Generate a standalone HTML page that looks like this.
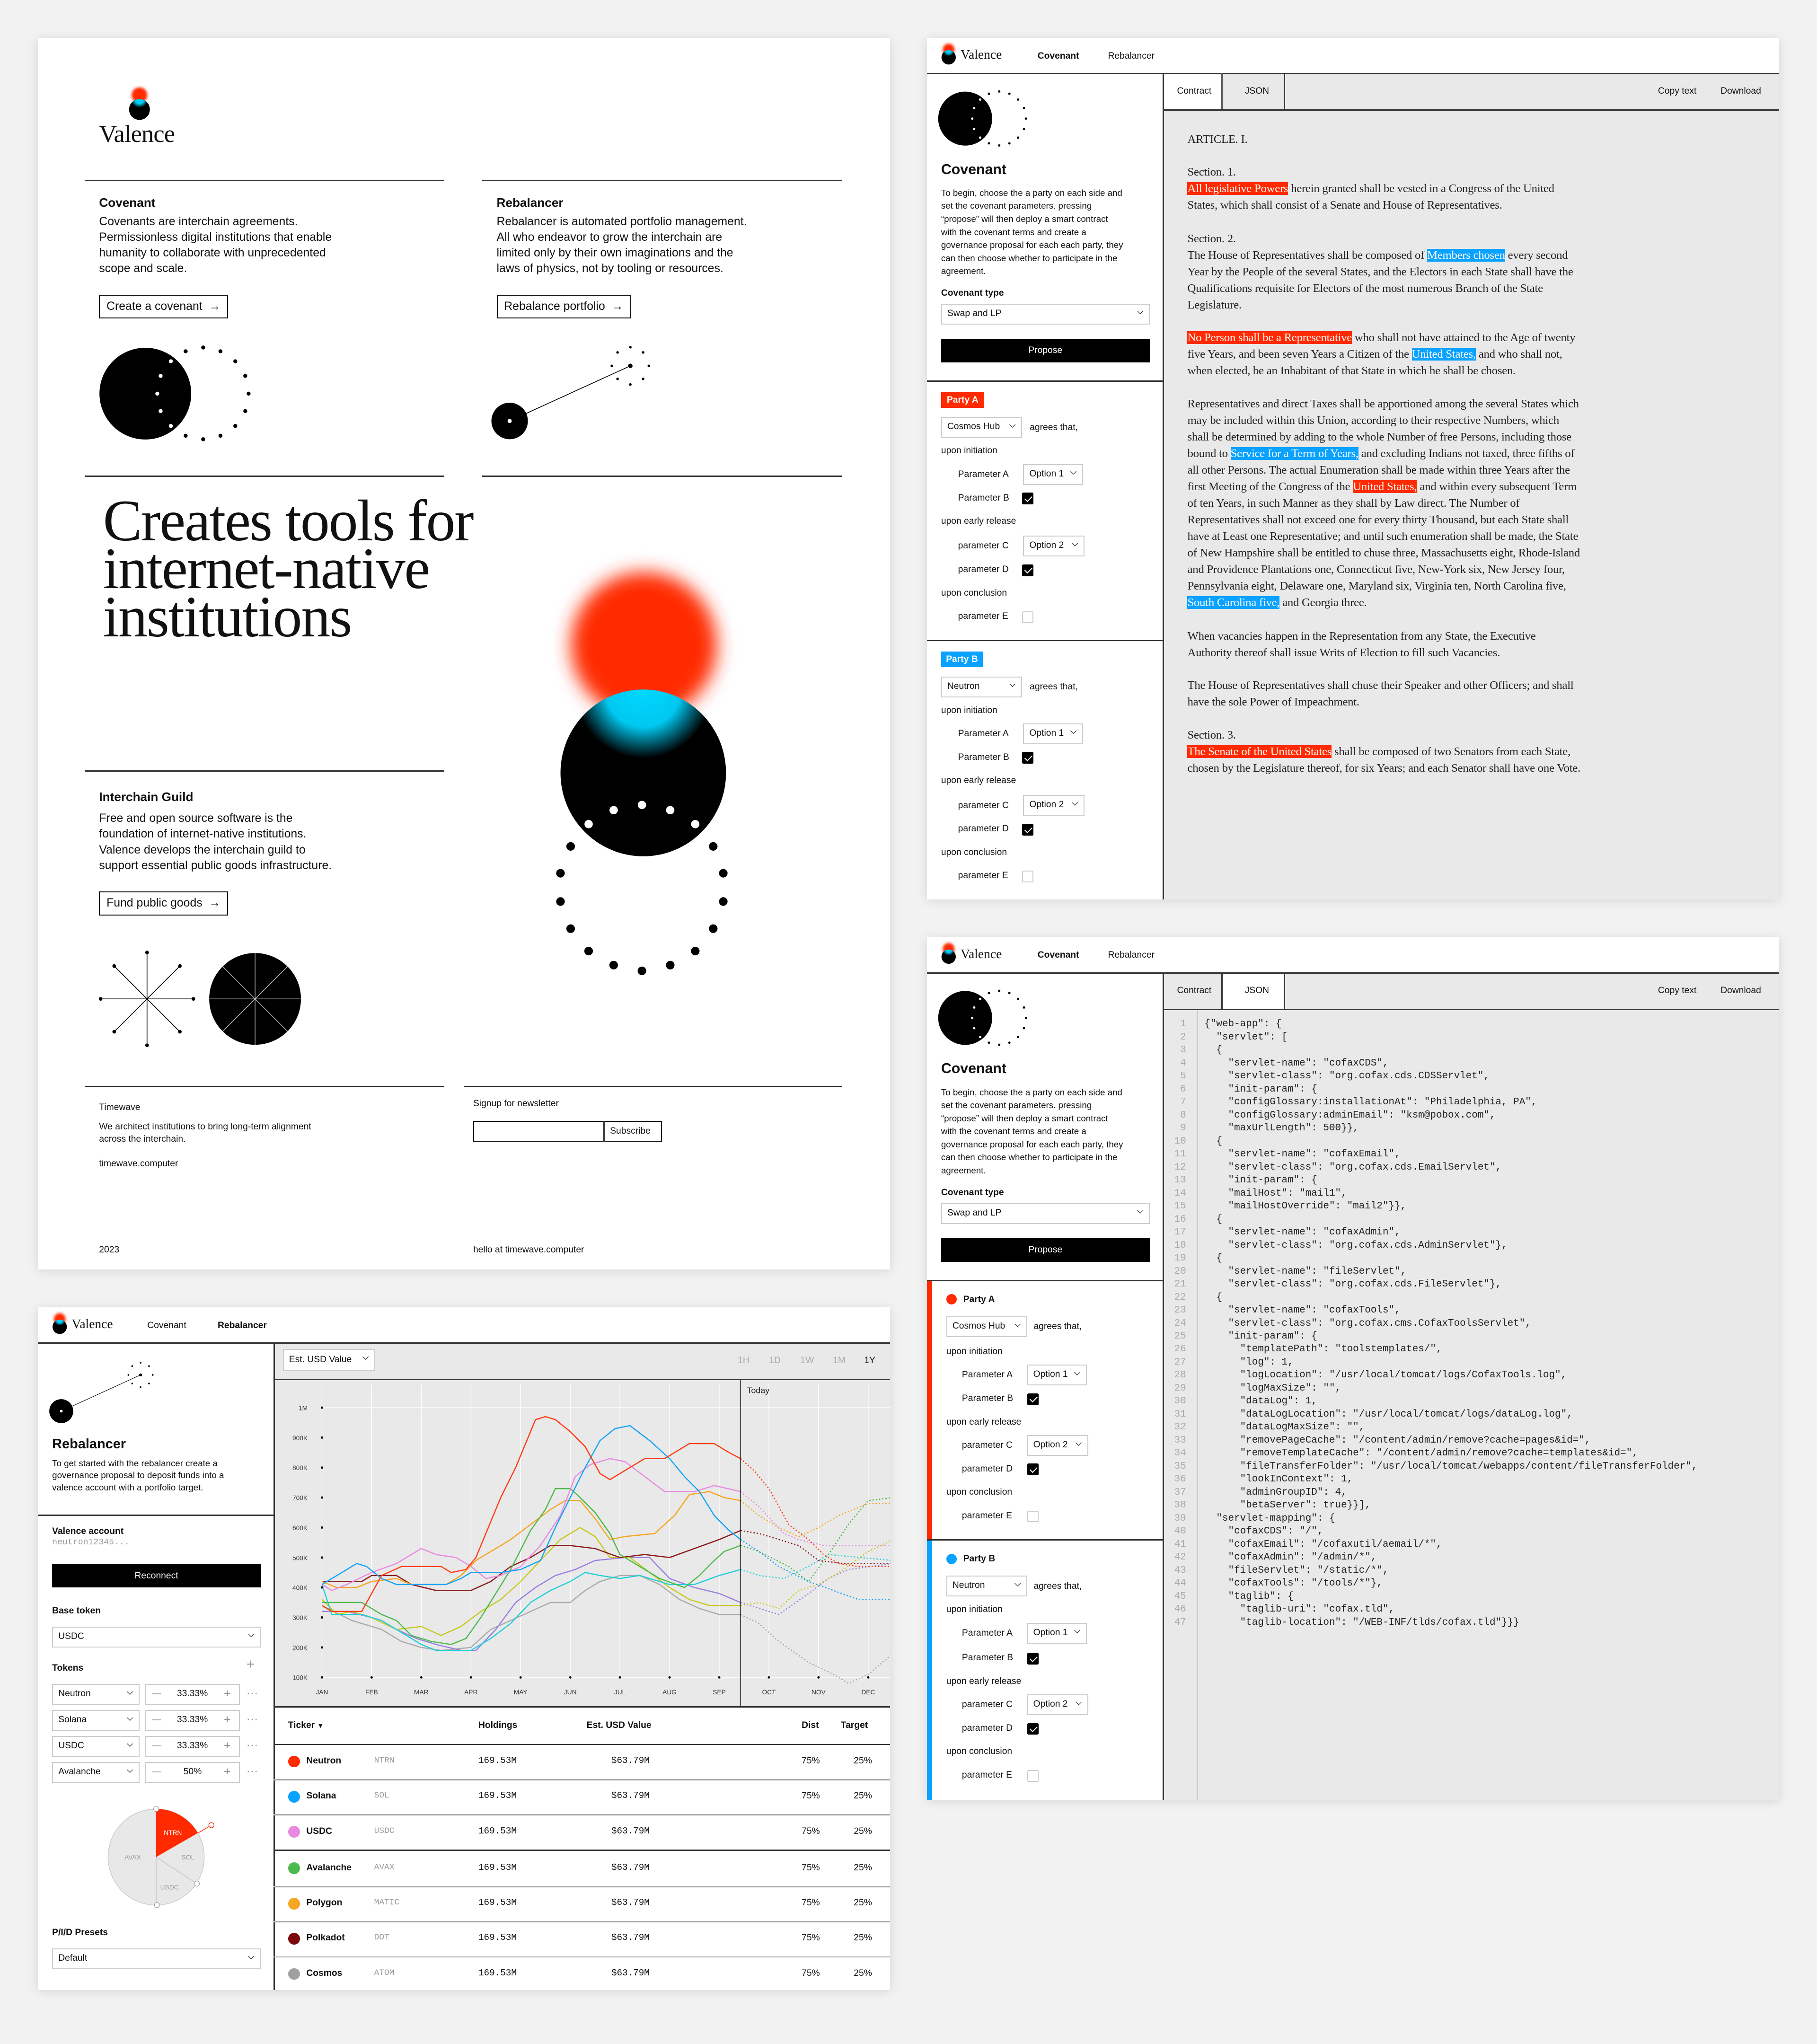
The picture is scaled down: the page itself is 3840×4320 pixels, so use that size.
<!DOCTYPE html>
<html><head><meta charset="utf-8">
<style>
*{box-sizing:border-box}
body{margin:0;width:3840px;height:4320px;overflow:hidden;background:#f2f2f2;font-family:"Liberation Sans",Arial,sans-serif;color:#111}
#w{zoom:2.75466;position:relative;width:1394px;height:1568px;overflow:hidden}
.a{position:absolute;white-space:nowrap}
.pn{position:absolute;background:#fff;box-shadow:0 1px 8px rgba(0,0,0,.12)}
.sel{position:absolute;background:#fff;border:1px solid #ccc;font-size:7px;line-height:14px;padding-left:4px;white-space:nowrap}
.sel:after{content:"";position:absolute;right:5px;top:3.5px;width:3px;height:3px;border-right:.7px solid #000;border-bottom:.7px solid #000;transform:rotate(45deg)}
.cb{position:absolute;width:9px;height:9px;border:1px solid #ccc;background:#fff;border-radius:1px}
.cb.on{background:#000;border-color:#000}
.cb.on:after{content:"";position:absolute;left:2.6px;top:.6px;width:2.4px;height:4.6px;border-right:1px solid #fff;border-bottom:1px solid #fff;transform:rotate(45deg)}
.t7{font-size:7px;line-height:10px}
.b7{font-size:7px;line-height:10px;font-weight:bold}
.hl{position:absolute;height:1px;background:#333}
.vl{position:absolute;width:1px;background:#333}
.ct{position:absolute;font-family:"Liberation Serif",serif;font-size:9px;line-height:12.7px;color:#222;white-space:nowrap;letter-spacing:-.1px}
.r{background:#ff2a00;color:#fff}
.bl{background:#0aa2ff;color:#fff}
.btn{position:absolute;border:1px solid #111;font-size:9px;line-height:17px;padding:0 5px;white-space:nowrap}
.lt{font-size:9px;line-height:12px}
.pb{position:absolute;width:181px;height:199px}
.mono{font-family:"Liberation Mono",monospace}
.g{color:#9a9a9a}
pre.a{white-space:pre}
.dots{position:absolute;font-size:9px;color:#999;line-height:10px}
</style></head><body><div id="w">

<div class="pn" style="left:29px;top:29px;width:654px;height:945px"></div>
<div class="pn" style="left:711px;top:29px;width:654px;height:661px"></div>
<div class="pn" style="left:711px;top:719px;width:654px;height:662px"></div>
<div class="pn" style="left:29px;top:1003px;width:654px;height:524px"></div>

<div class="a" style="left:892px;top:56px;width:473px;height:634px;background:#e9e9e9"></div>
<div class="a" style="left:892px;top:56px;width:45px;height:28px;background:#fff"></div>
<div class="a" style="left:892px;top:746px;width:473px;height:635px;background:#e9e9e9"></div>
<div class="a" style="left:937px;top:746px;width:48px;height:28px;background:#fff"></div>
<div class="a" style="left:210px;top:1030px;width:473px;height:279px;background:#e9e9e9"></div>

<svg class="a" style="left:0;top:0" width="1394" height="1568" viewBox="0 0 1394 1568">
<defs>
<filter id="bl" x="-50%" y="-50%" width="200%" height="200%"><feGaussianBlur stdDeviation="7"/></filter>
<filter id="bl1" x="-50%" y="-50%" width="200%" height="200%"><feGaussianBlur stdDeviation="1"/></filter>
<radialGradient id="cy" cx="50%" cy="0%" r="75%" fx="50%" fy="0%"><stop offset="0" stop-color="#00d8ff"/><stop offset=".3" stop-color="#00c8f0"/><stop offset=".55" stop-color="#000"/><stop offset="1" stop-color="#000"/></radialGradient>
<g id="cov">
<circle r="20.7" fill="#000"/>
<g fill="#000"><circle cx="18.2" cy="-19.1" r=".9"/><circle cx="26.1" cy="-20.8" r=".9"/><circle cx="33.9" cy="-19.1" r=".9"/><circle cx="40.6" cy="-14.6" r=".9"/><circle cx="45.1" cy="-8" r=".9"/><circle cx="46.6" cy="0" r=".9"/><circle cx="45.1" cy="7.9" r=".9"/><circle cx="40.6" cy="14.6" r=".9"/><circle cx="33.9" cy="19" r=".9"/><circle cx="26.1" cy="20.6" r=".9"/><circle cx="18.2" cy="19" r=".9"/></g>
<g fill="#fff"><circle cx="11.5" cy="-14.6" r=".9"/><circle cx="6.9" cy="-8" r=".9"/><circle cx="5.4" cy="0" r=".9"/><circle cx="6.9" cy="7.9" r=".9"/><circle cx="11.5" cy="14.6" r=".9"/></g>
</g>
<g id="reb">
<line x1="0" y1="0" x2="92.6" y2="-42.3" stroke="#000" stroke-width=".6"/>
<circle r="14" fill="#000"/><circle r="1.6" fill="#fff"/>
<g fill="#000"><circle cx="92.6" cy="-42.3" r="1.7"/><circle cx="92.6" cy="-56.6" r="1"/><circle cx="102.4" cy="-52.6" r="1"/><circle cx="106.8" cy="-42.3" r="1"/><circle cx="102.4" cy="-32.3" r="1"/><circle cx="92.6" cy="-28" r="1"/><circle cx="82.8" cy="-32.3" r="1"/><circle cx="78.4" cy="-42.3" r="1"/><circle cx="82.8" cy="-52.6" r="1"/></g>
</g>
<clipPath id="cc"><rect x="210" y="1058" width="473" height="251"/></clipPath>
</defs>

<circle cx="107" cy="73" r="6" fill="#ff2a00" filter="url(#bl1)"/>
<circle cx="107" cy="84" r="8" fill="url(#cy)"/>
<use href="#cov" transform="translate(111.5,302) scale(1.7)"/>
<use href="#reb" transform="translate(391,323)"/>
<g stroke="#000" stroke-width=".6"><line x1="77.2" y1="766.4" x2="148.4" y2="766.4"/><line x1="112.8" y1="730.8" x2="112.8" y2="802"/><line x1="87.6" y1="741.2" x2="138" y2="791.6"/><line x1="138" y1="741.2" x2="87.6" y2="791.6"/></g>
<g fill="#000"><circle cx="77.2" cy="766.4" r="1.4"/><circle cx="148.4" cy="766.4" r="1.4"/><circle cx="112.8" cy="730.8" r="1.4"/><circle cx="112.8" cy="802" r="1.4"/><circle cx="87.6" cy="741.2" r="1.4"/><circle cx="138" cy="791.6" r="1.4"/><circle cx="138" cy="741.2" r="1.4"/><circle cx="87.6" cy="791.6" r="1.4"/></g>
<circle cx="195.7" cy="766.4" r="35.2" fill="#000"/>
<g stroke="#bbb" stroke-width=".5"><line x1="160.5" y1="766.4" x2="230.9" y2="766.4"/><line x1="195.7" y1="731.2" x2="195.7" y2="801.6"/><line x1="170.8" y1="741.5" x2="220.6" y2="791.3"/><line x1="220.6" y1="741.5" x2="170.8" y2="791.3"/></g>
<circle cx="494" cy="495" r="56" fill="#ff2a00" filter="url(#bl)"/>
<ellipse cx="493.5" cy="593" rx="63.5" ry="64" fill="url(#cy)"/>
<g fill="#fff"><circle cx="451.6" cy="632.3" r="3.2"/><circle cx="470.8" cy="621.6" r="3.2"/><circle cx="492.5" cy="617.6" r="3.2"/><circle cx="514.2" cy="621.6" r="3.2"/><circle cx="533.4" cy="632.3" r="3.2"/></g>
<g fill="#000"><circle cx="437.8" cy="649.4" r="3.3"/><circle cx="430" cy="670" r="3.3"/><circle cx="430" cy="691.7" r="3.3"/><circle cx="437.8" cy="712.5" r="3.3"/><circle cx="451.6" cy="729.7" r="3.3"/><circle cx="470.8" cy="740.5" r="3.3"/><circle cx="492.5" cy="744.9" r="3.3"/><circle cx="514.2" cy="740.5" r="3.3"/><circle cx="533.4" cy="729.7" r="3.3"/><circle cx="547.2" cy="712.5" r="3.3"/><circle cx="554.9" cy="691.7" r="3.3"/><circle cx="554.9" cy="670" r="3.3"/><circle cx="547.2" cy="649.4" r="3.3"/></g>

<g><circle cx="727.8" cy="38" r="4.5" fill="#ff2a00" filter="url(#bl1)"/><circle cx="727.8" cy="44" r="5.5" fill="url(#cy)"/></g>
<g><circle cx="727.8" cy="728" r="4.5" fill="#ff2a00" filter="url(#bl1)"/><circle cx="727.8" cy="734" r="5.5" fill="url(#cy)"/></g>
<g><circle cx="45.8" cy="1012" r="4.5" fill="#ff2a00" filter="url(#bl1)"/><circle cx="45.8" cy="1018" r="5.5" fill="url(#cy)"/></g>
<use href="#cov" transform="translate(740.5,91)"/>
<use href="#cov" transform="translate(740.5,781)"/>
<use href="#reb" transform="translate(47,1082.7) scale(0.657)"/>

<circle cx="119.8" cy="1424.8" r="36.9" fill="#e8e8e8" stroke="#c8c8c8" stroke-width=".5"/>
<path d="M119.8 1424.8 L119.8 1387.9 A36.9 36.9 0 0 1 151.8 1406.4 Z" fill="#ff2a00"/>
<g stroke="#c0c0c0" stroke-width=".5"><line x1="119.8" y1="1424.8" x2="119.8" y2="1461.7"/><line x1="119.8" y1="1424.8" x2="151" y2="1445.2"/></g>
<line x1="151.8" y1="1406.4" x2="162.2" y2="1400.4" stroke="#ff2a00" stroke-width=".5"/>
<circle cx="162.2" cy="1400.4" r="2" fill="#fff" stroke="#ff2a00" stroke-width=".5"/>
<g fill="#fff" stroke="#999" stroke-width=".4"><circle cx="119.8" cy="1387.9" r="2"/><circle cx="151" cy="1445.2" r="2"/><circle cx="120.4" cy="1461.7" r="2"/></g>
<g font-family="Liberation Sans" font-size="5" fill="#999" text-anchor="middle"><text x="132.6" y="1407.8" fill="#fff">NTRN</text><text x="101.8" y="1426.6">AVAX</text><text x="144.3" y="1426.6">SOL</text><text x="130" y="1449.8">USDC</text></g>

<rect x="210" y="1058" width="473" height="251" fill="#e9e9e9"/>
<g stroke="#fff" stroke-width=".5"><line x1="247" y1="1062" x2="247" y2="1287"/><line x1="285.1" y1="1062" x2="285.1" y2="1287"/><line x1="323.2" y1="1062" x2="323.2" y2="1287"/><line x1="361.3" y1="1062" x2="361.3" y2="1287"/><line x1="399.4" y1="1062" x2="399.4" y2="1287"/><line x1="437.5" y1="1062" x2="437.5" y2="1287"/><line x1="475.6" y1="1062" x2="475.6" y2="1287"/><line x1="513.7" y1="1062" x2="513.7" y2="1287"/><line x1="551.8" y1="1062" x2="551.8" y2="1287"/><line x1="589.9" y1="1062" x2="589.9" y2="1287"/><line x1="628" y1="1062" x2="628" y2="1287"/><line x1="666.1" y1="1062" x2="666.1" y2="1287"/><line x1="247" y1="1080" x2="683" y2="1080"/><line x1="247" y1="1287" x2="683" y2="1287"/></g>
<g clip-path="url(#cc)" fill="none" stroke-width=".9" stroke-linejoin="round">
<g transform="translate(247,1310) scale(38.1,-0.23)">
<polyline vector-effect="non-scaling-stroke" stroke="#aaa" points="0,340 .6,290 1.2,260 1.6,220 2,200 2.4,190 3,200 3.4,260 3.8,290 4.2,320 4.6,350 5,350 5.3,390 5.6,420 6,440 6.4,440 6.8,410 7.2,360 7.6,330 8,310 8.43,310"/>
<polyline vector-effect="non-scaling-stroke" stroke="#9a7ee0" points="0,320 .5,320 1,300 1.5,260 1.9,230 2.3,210 2.8,190 3.1,190 3.5,260 3.9,350 4.3,400 4.7,440 5.1,460 5.5,490 6.1,500 6.6,500 7,430 7.5,400 8,380 8.43,350"/>
<polyline vector-effect="non-scaling-stroke" stroke="#c8c820" points="0,360 .3,310 .6,320 1,300 1.5,260 2,270 2.4,240 2.8,270 3.2,320 3.6,360 4,420 4.4,490 4.8,560 5.2,600 5.5,570 5.8,500 6.2,500 6.6,450 7,400 7.4,360 7.8,340 8.43,340"/>
<polyline vector-effect="non-scaling-stroke" stroke="#22cfd8" points="0,410 .2,310 .8,310 1.2,290 1.6,250 2,210 2.3,190 3,190 3.4,230 3.8,280 4.2,350 4.6,390 5,420 5.3,450 5.6,440 6,430 6.4,440 7,410 7.5,410 8,440 8.43,460"/>
<polyline vector-effect="non-scaling-stroke" stroke="#8b1a1a" points="0,420 .8,420 1,440 1.5,440 1.8,410 2.3,390 3,390 3.4,420 3.8,470 4.2,500 4.6,540 5,540 5.5,530 6,500 6.5,510 7,500 7.5,530 8,560 8.43,590"/>
<polyline vector-effect="non-scaling-stroke" stroke="#f5a623" points="0,420 .3,400 .7,400 1,420 1.5,430 1.8,410 2.5,410 2.8,440 3.1,490 3.4,520 3.8,560 4.2,610 4.6,660 4.9,690 5.2,690 5.5,630 5.8,560 6.1,570 6.7,580 7.1,640 7.4,710 7.8,720 8.1,700 8.43,690"/>
<polyline vector-effect="non-scaling-stroke" stroke="#4cba4c" points="0,350 .8,350 1.2,310 1.5,290 1.8,240 2.2,220 2.6,210 2.9,230 3.2,300 3.5,380 3.8,460 4.2,590 4.5,660 4.7,730 5,730 5.2,700 5.5,650 5.8,580 6,510 6.4,470 6.8,430 7.3,400 7.6,440 7.9,490 8.1,520 8.43,540"/>
<polyline vector-effect="non-scaling-stroke" stroke="#e98ae0" points="0,410 .2,390 .5,410 1,450 1.5,480 2,530 2.3,510 2.7,500 3,470 3.3,430 3.6,440 4,470 4.4,540 4.8,640 5.1,770 5.4,810 5.8,830 6.1,820 6.5,770 6.9,720 7.5,720 7.9,740 8.43,720"/>
<polyline vector-effect="non-scaling-stroke" stroke="#14a4f5" points="0,410 .3,440 .5,460 .7,480 .9,470 1.2,430 1.5,410 2.5,410 2.8,430 3,450 3.6,450 4,460 4.4,490 4.7,600 5,700 5.3,800 5.6,890 5.9,930 6.2,940 6.6,890 7,830 7.3,770 7.6,720 7.9,640 8.2,590 8.43,560"/>
<polyline vector-effect="non-scaling-stroke" stroke="#ff3b14" points="0,340 .2,320 .8,320 1,380 1.2,440 1.6,470 2.4,470 2.6,450 2.9,460 3.1,500 3.3,580 3.6,700 3.9,800 4.1,880 4.3,960 4.5,970 4.7,960 5,920 5.3,870 5.6,780 5.8,760 6.1,790 6.5,830 6.9,830 7.2,860 7.4,880 7.9,880 8.2,850 8.43,830"/>
<g stroke-dasharray="1 1.5">
<polyline vector-effect="non-scaling-stroke" stroke="#aaa" points="8.43,310 8.8,280 9.2,220 9.8,150 10.3,110 10.6,80 11,110 11.5,180"/>
<polyline vector-effect="non-scaling-stroke" stroke="#9a7ee0" points="8.43,350 8.8,330 9.2,310 9.8,380 10.2,430 10.6,460 11.5,480"/>
<polyline vector-effect="non-scaling-stroke" stroke="#c8c820" points="8.43,340 8.8,350 9.2,330 9.6,390 10,410 10.5,460 11,520 11.5,560"/>
<polyline vector-effect="non-scaling-stroke" stroke="#22cfd8" points="8.43,460 8.8,440 9.3,430 9.8,470 10.2,510 11.5,490"/>
<polyline vector-effect="non-scaling-stroke" stroke="#8b1a1a" points="8.43,590 8.8,580 9.2,560 9.6,540 10,490 10.5,480 11.5,480"/>
<polyline vector-effect="non-scaling-stroke" stroke="#f5a623" points="8.43,690 8.8,640 9.2,600 9.6,570 10,600 10.4,640 11,680 11.5,680"/>
<polyline vector-effect="non-scaling-stroke" stroke="#4cba4c" points="8.43,540 8.8,520 9.4,470 9.8,420 10.2,510 10.6,610 11,690 11.5,700"/>
<polyline vector-effect="non-scaling-stroke" stroke="#e98ae0" points="8.43,720 8.8,670 9.3,580 9.6,560 10.1,540 11.5,540"/>
<polyline vector-effect="non-scaling-stroke" stroke="#14a4f5" points="8.43,560 8.8,520 9.2,470 9.8,420 10.3,390 10.8,360 11.5,360"/>
<polyline vector-effect="non-scaling-stroke" stroke="#ff3b14" points="8.43,830 8.7,790 9,730 9.4,610 9.8,560 10.1,510 10.4,480 10.8,470 11.5,470"/>
</g></g></g>
<line x1="568" y1="1058" x2="568" y2="1309" stroke="#222" stroke-width=".6"/>
<g fill="#000"><circle cx="247" cy="1080" r=".9"/><circle cx="247" cy="1103" r=".9"/><circle cx="247" cy="1126" r=".9"/><circle cx="247" cy="1149" r=".9"/><circle cx="247" cy="1172" r=".9"/><circle cx="247" cy="1195" r=".9"/><circle cx="247" cy="1218" r=".9"/><circle cx="247" cy="1241" r=".9"/><circle cx="247" cy="1264" r=".9"/><circle cx="247" cy="1287" r=".9"/>
<circle cx="285.1" cy="1287" r=".9"/><circle cx="323.2" cy="1287" r=".9"/><circle cx="361.3" cy="1287" r=".9"/><circle cx="399.4" cy="1287" r=".9"/><circle cx="437.5" cy="1287" r=".9"/><circle cx="475.6" cy="1287" r=".9"/><circle cx="513.7" cy="1287" r=".9"/><circle cx="551.8" cy="1287" r=".9"/><circle cx="589.9" cy="1287" r=".9"/><circle cx="628" cy="1287" r=".9"/><circle cx="666.1" cy="1287" r=".9"/></g>
<g font-family="Liberation Sans" font-size="5" fill="#333" text-anchor="end"><text x="236" y="1082">1M</text><text x="236" y="1105">900K</text><text x="236" y="1128">800K</text><text x="236" y="1151">700K</text><text x="236" y="1174">600K</text><text x="236" y="1197">500K</text><text x="236" y="1220">400K</text><text x="236" y="1243">300K</text><text x="236" y="1266">200K</text><text x="236" y="1289">100K</text></g>
<g font-family="Liberation Sans" font-size="5" fill="#333" text-anchor="middle"><text x="247" y="1300">JAN</text><text x="285.1" y="1300">FEB</text><text x="323.2" y="1300">MAR</text><text x="361.3" y="1300">APR</text><text x="399.4" y="1300">MAY</text><text x="437.5" y="1300">JUN</text><text x="475.6" y="1300">JUL</text><text x="513.7" y="1300">AUG</text><text x="551.8" y="1300">SEP</text><text x="589.9" y="1300">OCT</text><text x="628" y="1300">NOV</text><text x="666.1" y="1300">DEC</text></g>
<text x="573" y="1069" font-family="Liberation Sans" font-size="6.5" fill="#222">Today</text>
</svg>

<!-- LANDING -->
<div class="a" style="left:76px;top:92px;font-family:'Liberation Serif',serif;font-size:19px;line-height:22px;letter-spacing:-.3px">Valence</div>
<div class="hl" style="left:65px;top:138px;width:276px"></div>
<div class="hl" style="left:370px;top:138px;width:276px"></div>
<div class="a" style="left:76px;top:150px;font-size:9.5px;font-weight:bold">Covenant</div>
<div class="a lt" style="left:76px;top:164px">Covenants are interchain agreements.<br>Permissionless digital institutions that enable<br>humanity to collaborate with unprecedented<br>scope and scale.</div>
<div class="btn" style="left:76px;top:226px">Create a covenant &nbsp;→</div>
<div class="a" style="left:381px;top:150px;font-size:9.5px;font-weight:bold">Rebalancer</div>
<div class="a lt" style="left:381px;top:164px">Rebalancer is automated portfolio management.<br>All who endeavor to grow the interchain are<br>limited only by their own imaginations and the<br>laws of physics, not by tooling or resources.</div>
<div class="btn" style="left:381px;top:226px">Rebalance portfolio &nbsp;→</div>
<div class="hl" style="left:65px;top:365px;width:276px"></div>
<div class="hl" style="left:370px;top:365px;width:276px"></div>
<div class="a" style="left:79px;top:381px;font-family:'Liberation Serif',serif;font-size:45px;line-height:37px;letter-spacing:-.8px">Creates tools for<br>internet-native<br>institutions</div>
<div class="hl" style="left:65px;top:591px;width:276px"></div>
<div class="a" style="left:76px;top:606px;font-size:9.5px;font-weight:bold">Interchain Guild</div>
<div class="a lt" style="left:76px;top:622px">Free and open source software is the<br>foundation of internet-native institutions.<br>Valence develops the interchain guild to<br>support essential public goods infrastructure.</div>
<div class="btn" style="left:76px;top:684px">Fund public goods &nbsp;→</div>
<div class="hl" style="left:65px;top:833px;width:276px"></div>
<div class="hl" style="left:356px;top:833px;width:290px"></div>
<div class="a" style="left:76px;top:846px;font-size:7px">Timewave</div>
<div class="a" style="left:76px;top:860px;font-size:7px;line-height:9.5px">We architect institutions to bring long-term alignment<br>across the interchain.</div>
<div class="a" style="left:76px;top:889px;font-size:7px">timewave.computer</div>
<div class="a" style="left:363px;top:843px;font-size:7px">Signup for newsletter</div>
<div class="a" style="left:363px;top:860px;width:145px;height:16px;border:1px solid #111"></div>
<div class="vl" style="left:463px;top:860px;height:16px"></div>
<div class="a" style="left:468px;top:864px;font-size:7px">Subscribe</div>
<div class="a" style="left:76px;top:955px;font-size:7px">2023</div>
<div class="a" style="left:363px;top:955px;font-size:7px">hello at timewave.computer</div>

<!-- COVENANT contract -->
<div class="a" style="left:737px;top:36px;font-family:'Liberation Serif',serif;font-size:10px">Valence</div>
<div class="a b7" style="left:796px;top:38px">Covenant</div>
<div class="a t7" style="left:850px;top:38px">Rebalancer</div>
<div class="hl" style="left:711px;top:56px;width:654px"></div>
<div class="vl" style="left:892px;top:56px;height:634px"></div>
<div class="vl" style="left:937px;top:56px;height:28px;background:#555"></div>
<div class="vl" style="left:985px;top:56px;height:28px"></div>
<div class="hl" style="left:892px;top:84px;width:473px"></div>
<div class="a t7" style="left:903px;top:65px">Contract</div>
<div class="a t7" style="left:955px;top:65px">JSON</div>
<div class="a t7" style="left:1272px;top:65px">Copy text</div>
<div class="a t7" style="left:1320px;top:65px">Download</div>

<div class="a" style="left:722px;top:124px;font-size:11px;font-weight:bold">Covenant</div>
<div class="a" style="left:722px;top:143px;font-size:6.8px;line-height:10px">To begin, choose the a party on each side and<br>set the covenant parameters. pressing<br>“propose” will then deploy a smart contract<br>with the covenant terms and create a<br>governance proposal for each each party, they<br>can then choose whether to participate in the<br>agreement.</div>
<div class="a b7" style="left:722px;top:220px">Covenant type</div>
<div class="sel" style="left:722px;top:233px;width:160px;height:16px">Swap and LP</div>
<div class="a" style="left:722px;top:260px;width:160px;height:18px;background:#000;color:#fff;font-size:7px;line-height:18px;text-align:center">Propose</div>
<div class="hl" style="left:711px;top:292px;width:181px"></div>

<div class="pb" style="left:711px;top:292px">
<div class="a" style="left:11px;top:9px;width:33px;height:12px;background:#ff2a00;color:#fff;font-size:7px;line-height:12px;font-weight:bold;text-align:center">Party A</div>
<div class="sel" style="left:11px;top:28px;width:62px;height:16px">Cosmos Hub</div>
<div class="a t7" style="left:79px;top:31px">agrees that,</div>
<div class="a t7" style="left:11px;top:49px">upon initiation</div>
<div class="a t7" style="left:24px;top:67px">Parameter A</div><div class="sel" style="left:74px;top:64px;width:46px;height:16px">Option 1</div>
<div class="a t7" style="left:24px;top:85px">Parameter B</div><div class="cb on" style="left:73px;top:86px"></div>
<div class="a t7" style="left:11px;top:103px">upon early release</div>
<div class="a t7" style="left:24px;top:122px">parameter C</div><div class="sel" style="left:74px;top:119px;width:47px;height:16px">Option 2</div>
<div class="a t7" style="left:24px;top:140px">parameter D</div><div class="cb on" style="left:73px;top:141px"></div>
<div class="a t7" style="left:11px;top:158px">upon conclusion</div>
<div class="a t7" style="left:24px;top:176px">parameter E</div><div class="cb" style="left:73px;top:177px"></div>
</div>
<div class="hl" style="left:711px;top:491px;width:181px"></div>
<div class="pb" style="left:711px;top:491px">
<div class="a" style="left:11px;top:9px;width:32px;height:12px;background:#0aa2ff;color:#fff;font-size:7px;line-height:12px;font-weight:bold;text-align:center">Party B</div>
<div class="sel" style="left:11px;top:28px;width:62px;height:16px">Neutron</div>
<div class="a t7" style="left:79px;top:31px">agrees that,</div>
<div class="a t7" style="left:11px;top:49px">upon initiation</div>
<div class="a t7" style="left:24px;top:67px">Parameter A</div><div class="sel" style="left:74px;top:64px;width:46px;height:16px">Option 1</div>
<div class="a t7" style="left:24px;top:85px">Parameter B</div><div class="cb on" style="left:73px;top:86px"></div>
<div class="a t7" style="left:11px;top:103px">upon early release</div>
<div class="a t7" style="left:24px;top:122px">parameter C</div><div class="sel" style="left:74px;top:119px;width:47px;height:16px">Option 2</div>
<div class="a t7" style="left:24px;top:140px">parameter D</div><div class="cb on" style="left:73px;top:141px"></div>
<div class="a t7" style="left:11px;top:158px">upon conclusion</div>
<div class="a t7" style="left:24px;top:176px">parameter E</div><div class="cb" style="left:73px;top:177px"></div>
</div>

<div class="ct" style="left:911px;top:101px">ARTICLE. I.</div>
<div class="ct" style="left:911px;top:126px">Section. 1.<br><span class="r">All legislative Powers</span> herein granted shall be vested in a Congress of the United<br>States, which shall consist of a Senate and House of Representatives.</div>
<div class="ct" style="left:911px;top:177px">Section. 2.<br>The House of Representatives shall be composed of <span class="bl">Members chosen</span> every second<br>Year by the People of the several States, and the Electors in each State shall have the<br>Qualifications requisite for Electors of the most numerous Branch of the State<br>Legislature.</div>
<div class="ct" style="left:911px;top:253px"><span class="r">No Person shall be a Representative</span> who shall not have attained to the Age of twenty<br>five Years, and been seven Years a Citizen of the <span class="bl">United States,</span> and who shall not,<br>when elected, be an Inhabitant of that State in which he shall be chosen.</div>
<div class="ct" style="left:911px;top:304px">Representatives and direct Taxes shall be apportioned among the several States which<br>may be included within this Union, according to their respective Numbers, which<br>shall be determined by adding to the whole Number of free Persons, including those<br>bound to <span class="bl">Service for a Term of Years,</span> and excluding Indians not taxed, three fifths of<br>all other Persons. The actual Enumeration shall be made within three Years after the<br>first Meeting of the Congress of the <span class="r">United States,</span> and within every subsequent Term<br>of ten Years, in such Manner as they shall by Law direct. The Number of<br>Representatives shall not exceed one for every thirty Thousand, but each State shall<br>have at Least one Representative; and until such enumeration shall be made, the State<br>of New Hampshire shall be entitled to chuse three, Massachusetts eight, Rhode-Island<br>and Providence Plantations one, Connecticut five, New-York six, New Jersey four,<br>Pennsylvania eight, Delaware one, Maryland six, Virginia ten, North Carolina five,<br><span class="bl">South Carolina five,</span> and Georgia three.</div>
<div class="ct" style="left:911px;top:482px">When vacancies happen in the Representation from any State, the Executive<br>Authority thereof shall issue Writs of Election to fill such Vacancies.</div>
<div class="ct" style="left:911px;top:520px">The House of Representatives shall chuse their Speaker and other Officers; and shall<br>have the sole Power of Impeachment.</div>
<div class="ct" style="left:911px;top:558px">Section. 3.<br><span class="r">The Senate of the United States</span> shall be composed of two Senators from each State,<br>chosen by the Legislature thereof, for six Years; and each Senator shall have one Vote.</div>

<!-- COVENANT json -->
<div class="a" style="left:737px;top:726px;font-family:'Liberation Serif',serif;font-size:10px">Valence</div>
<div class="a b7" style="left:796px;top:728px">Covenant</div>
<div class="a t7" style="left:850px;top:728px">Rebalancer</div>
<div class="hl" style="left:711px;top:746px;width:654px"></div>
<div class="vl" style="left:892px;top:746px;height:635px"></div>
<div class="vl" style="left:937px;top:746px;height:28px"></div>
<div class="vl" style="left:985px;top:746px;height:28px"></div>
<div class="hl" style="left:892px;top:774px;width:473px"></div>
<div class="a t7" style="left:903px;top:755px">Contract</div>
<div class="a t7" style="left:955px;top:755px">JSON</div>
<div class="a t7" style="left:1272px;top:755px">Copy text</div>
<div class="a t7" style="left:1320px;top:755px">Download</div>
<div class="a" style="left:918px;top:775px;width:1px;height:606px;background:#ccc"></div>

<div class="a" style="left:722px;top:814px;font-size:11px;font-weight:bold">Covenant</div>
<div class="a" style="left:722px;top:833px;font-size:6.8px;line-height:10px">To begin, choose the a party on each side and<br>set the covenant parameters. pressing<br>“propose” will then deploy a smart contract<br>with the covenant terms and create a<br>governance proposal for each each party, they<br>can then choose whether to participate in the<br>agreement.</div>
<div class="a b7" style="left:722px;top:910px">Covenant type</div>
<div class="sel" style="left:722px;top:923px;width:160px;height:16px">Swap and LP</div>
<div class="a" style="left:722px;top:950px;width:160px;height:18px;background:#000;color:#fff;font-size:7px;line-height:18px;text-align:center">Propose</div>
<div class="hl" style="left:711px;top:982px;width:181px"></div>

<div class="a" style="left:711px;top:983px;width:4px;height:198px;background:#ff2a00"></div>
<div class="pb" style="left:715px;top:983px">
<div class="a" style="left:11px;top:10px;width:8px;height:8px;border-radius:50%;background:#ff2a00"></div>
<div class="a b7" style="left:24px;top:9px">Party A</div>
<div class="sel" style="left:11px;top:27px;width:62px;height:16px">Cosmos Hub</div>
<div class="a t7" style="left:78px;top:30px">agrees that,</div>
<div class="a t7" style="left:11px;top:49px">upon initiation</div>
<div class="a t7" style="left:23px;top:67px">Parameter A</div><div class="sel" style="left:73px;top:64px;width:46px;height:16px">Option 1</div>
<div class="a t7" style="left:23px;top:85px">Parameter B</div><div class="cb on" style="left:73px;top:86px"></div>
<div class="a t7" style="left:11px;top:103px">upon early release</div>
<div class="a t7" style="left:23px;top:121px">parameter C</div><div class="sel" style="left:73px;top:118px;width:47px;height:16px">Option 2</div>
<div class="a t7" style="left:23px;top:139px">parameter D</div><div class="cb on" style="left:73px;top:140px"></div>
<div class="a t7" style="left:11px;top:157px">upon conclusion</div>
<div class="a t7" style="left:23px;top:175px">parameter E</div><div class="cb" style="left:73px;top:176px"></div>
</div>
<div class="hl" style="left:711px;top:1181px;width:181px"></div>
<div class="a" style="left:711px;top:1182px;width:4px;height:199px;background:#0aa2ff"></div>
<div class="pb" style="left:715px;top:1182px">
<div class="a" style="left:11px;top:10px;width:8px;height:8px;border-radius:50%;background:#0aa2ff"></div>
<div class="a b7" style="left:24px;top:9px">Party B</div>
<div class="sel" style="left:11px;top:27px;width:62px;height:16px">Neutron</div>
<div class="a t7" style="left:78px;top:30px">agrees that,</div>
<div class="a t7" style="left:11px;top:48px">upon initiation</div>
<div class="a t7" style="left:23px;top:66px">Parameter A</div><div class="sel" style="left:73px;top:63px;width:46px;height:16px">Option 1</div>
<div class="a t7" style="left:23px;top:85px">Parameter B</div><div class="cb on" style="left:73px;top:86px"></div>
<div class="a t7" style="left:11px;top:103px">upon early release</div>
<div class="a t7" style="left:23px;top:121px">parameter C</div><div class="sel" style="left:73px;top:118px;width:47px;height:16px">Option 2</div>
<div class="a t7" style="left:23px;top:139px">parameter D</div><div class="cb on" style="left:73px;top:140px"></div>
<div class="a t7" style="left:11px;top:157px">upon conclusion</div>
<div class="a t7" style="left:23px;top:175px">parameter E</div><div class="cb" style="left:73px;top:176px"></div>
</div>

<pre class="a mono" style="left:896px;top:781px;margin:0;font-size:7.6px;line-height:9.98px;color:#aaa;text-align:right;width:14px">1
2
3
4
5
6
7
8
9
10
11
12
13
14
15
16
17
18
19
20
21
22
23
24
25
26
27
28
29
30
31
32
33
34
35
36
37
38
39
40
41
42
43
44
45
46
47</pre>
<pre class="a mono" style="left:924px;top:781px;margin:0;font-size:7.6px;line-height:9.98px;color:#222">{"web-app": {
  "servlet": [
  {
    "servlet-name": "cofaxCDS",
    "servlet-class": "org.cofax.cds.CDSServlet",
    "init-param": {
    "configGlossary:installationAt": "Philadelphia, PA",
    "configGlossary:adminEmail": "ksm@pobox.com",
    "maxUrlLength": 500}},
  {
    "servlet-name": "cofaxEmail",
    "servlet-class": "org.cofax.cds.EmailServlet",
    "init-param": {
    "mailHost": "mail1",
    "mailHostOverride": "mail2"}},
  {
    "servlet-name": "cofaxAdmin",
    "servlet-class": "org.cofax.cds.AdminServlet"},
  {
    "servlet-name": "fileServlet",
    "servlet-class": "org.cofax.cds.FileServlet"},
  {
    "servlet-name": "cofaxTools",
    "servlet-class": "org.cofax.cms.CofaxToolsServlet",
    "init-param": {
      "templatePath": "toolstemplates/",
      "log": 1,
      "logLocation": "/usr/local/tomcat/logs/CofaxTools.log",
      "logMaxSize": "",
      "dataLog": 1,
      "dataLogLocation": "/usr/local/tomcat/logs/dataLog.log",
      "dataLogMaxSize": "",
      "removePageCache": "/content/admin/remove?cache=pages&amp;id=",
      "removeTemplateCache": "/content/admin/remove?cache=templates&amp;id=",
      "fileTransferFolder": "/usr/local/tomcat/webapps/content/fileTransferFolder",
      "lookInContext": 1,
      "adminGroupID": 4,
      "betaServer": true}}],
  "servlet-mapping": {
    "cofaxCDS": "/",
    "cofaxEmail": "/cofaxutil/aemail/*",
    "cofaxAdmin": "/admin/*",
    "fileServlet": "/static/*",
    "cofaxTools": "/tools/*"},
    "taglib": {
      "taglib-uri": "cofax.tld",
      "taglib-location": "/WEB-INF/tlds/cofax.tld"}}}</pre>

<!-- REBALANCER -->
<div class="a" style="left:55px;top:1010px;font-family:'Liberation Serif',serif;font-size:10px">Valence</div>
<div class="a t7" style="left:113px;top:1012px">Covenant</div>
<div class="a b7" style="left:167px;top:1012px">Rebalancer</div>
<div class="hl" style="left:29px;top:1030px;width:654px"></div>
<div class="vl" style="left:210px;top:1030px;height:497px"></div>
<div class="hl" style="left:210px;top:1058px;width:473px"></div>
<div class="hl" style="left:210px;top:1309px;width:473px"></div>
<div class="sel" style="left:217px;top:1035px;width:71px;height:17px;line-height:15px">Est. USD Value</div>
<div class="a t7" style="left:566px;top:1039px;color:#aaa">1H</div>
<div class="a t7" style="left:590px;top:1039px;color:#aaa">1D</div>
<div class="a t7" style="left:614px;top:1039px;color:#aaa">1W</div>
<div class="a t7" style="left:639px;top:1039px;color:#aaa">1M</div>
<div class="a t7" style="left:663px;top:1039px">1Y</div>

<div class="a" style="left:40px;top:1102px;font-size:10.5px;font-weight:bold">Rebalancer</div>
<div class="a" style="left:40px;top:1118px;font-size:6.8px;line-height:9.3px">To get started with the rebalancer create a<br>governance proposal to deposit funds into a<br>valence account with a portfolio target.</div>
<div class="hl" style="left:29px;top:1162px;width:181px"></div>
<div class="a b7" style="left:40px;top:1170px">Valence account</div>
<div class="a mono" style="left:40px;top:1180px;font-size:6.6px;color:#999">neutron12345...</div>
<div class="a" style="left:40px;top:1200px;width:160px;height:18px;background:#000;color:#fff;font-size:7px;line-height:18px;text-align:center">Reconnect</div>
<div class="a b7" style="left:40px;top:1231px">Base token</div>
<div class="sel" style="left:40px;top:1248px;width:160px;height:16px">USDC</div>
<div class="a b7" style="left:40px;top:1275px">Tokens</div>
<div class="a" style="left:189px;top:1271px;font-size:11px;color:#999">+</div>

<div class="sel" style="left:40px;top:1292px;width:67px;height:16px">Neutron</div>
<div class="a" style="left:111px;top:1292px;width:73px;height:16px;border:1px solid #ccc;font-size:7px;line-height:14px"><span class="a" style="left:5px;color:#888">—</span><span class="a" style="left:24px">33.33%</span><span class="a" style="left:60px;color:#888;font-size:9px">+</span></div>
<div class="dots" style="left:189px;top:1294px">···</div>
<div class="sel" style="left:40px;top:1312px;width:67px;height:16px">Solana</div>
<div class="a" style="left:111px;top:1312px;width:73px;height:16px;border:1px solid #ccc;font-size:7px;line-height:14px"><span class="a" style="left:5px;color:#888">—</span><span class="a" style="left:24px">33.33%</span><span class="a" style="left:60px;color:#888;font-size:9px">+</span></div>
<div class="dots" style="left:189px;top:1314px">···</div>
<div class="sel" style="left:40px;top:1332px;width:67px;height:16px">USDC</div>
<div class="a" style="left:111px;top:1332px;width:73px;height:16px;border:1px solid #ccc;font-size:7px;line-height:14px"><span class="a" style="left:5px;color:#888">—</span><span class="a" style="left:24px">33.33%</span><span class="a" style="left:60px;color:#888;font-size:9px">+</span></div>
<div class="dots" style="left:189px;top:1334px">···</div>
<div class="sel" style="left:40px;top:1352px;width:67px;height:16px">Avalanche</div>
<div class="a" style="left:111px;top:1352px;width:73px;height:16px;border:1px solid #ccc;font-size:7px;line-height:14px"><span class="a" style="left:5px;color:#888">—</span><span class="a" style="left:29px">50%</span><span class="a" style="left:60px;color:#888;font-size:9px">+</span></div>
<div class="dots" style="left:189px;top:1354px">···</div>

<div class="a b7" style="left:40px;top:1478px">P/I/D Presets</div>
<div class="sel" style="left:40px;top:1495px;width:160px;height:16px">Default</div>

<div class="a b7" style="left:221px;top:1319px">Ticker <span style="font-size:5px">▼</span></div>
<div class="a b7" style="left:367px;top:1319px">Holdings</div>
<div class="a b7" style="left:450px;top:1319px">Est. USD Value</div>
<div class="a b7" style="left:615px;top:1319px">Dist</div>
<div class="a b7" style="left:645px;top:1319px">Target</div>
<div class="hl" style="left:210px;top:1338px;width:473px"></div>
<div class="hl" style="left:210px;top:1365px;width:473px;background:#aaa"></div>
<div class="hl" style="left:210px;top:1392px;width:473px;background:#aaa"></div>
<div class="hl" style="left:210px;top:1419px;width:473px"></div>
<div class="hl" style="left:210px;top:1447px;width:473px;background:#aaa"></div>
<div class="hl" style="left:210px;top:1474px;width:473px;background:#aaa"></div>
<div class="hl" style="left:210px;top:1501px;width:473px;background:#aaa"></div>

<div class="a" style="left:221px;top:1347px;width:9px;height:9px;border-radius:50%;background:#ff2a00"></div>
<div class="a b7" style="left:235px;top:1346px">Neutron</div><div class="a mono g" style="left:287px;top:1346px;font-size:6.5px;line-height:10px">NTRN</div>
<div class="a mono" style="left:367px;top:1346px;font-size:7px;line-height:10px">169.53M</div><div class="a mono" style="left:469px;top:1346px;font-size:7px;line-height:10px">$63.79M</div><div class="a t7" style="left:615px;top:1346px">75%</div><div class="a t7" style="left:655px;top:1346px">25%</div>

<div class="a" style="left:221px;top:1374px;width:9px;height:9px;border-radius:50%;background:#0aa2ff"></div>
<div class="a b7" style="left:235px;top:1373px">Solana</div><div class="a mono g" style="left:287px;top:1373px;font-size:6.5px;line-height:10px">SOL</div>
<div class="a mono" style="left:367px;top:1373px;font-size:7px;line-height:10px">169.53M</div><div class="a mono" style="left:469px;top:1373px;font-size:7px;line-height:10px">$63.79M</div><div class="a t7" style="left:615px;top:1373px">75%</div><div class="a t7" style="left:655px;top:1373px">25%</div>

<div class="a" style="left:221px;top:1401px;width:9px;height:9px;border-radius:50%;background:#e98ae0"></div>
<div class="a b7" style="left:235px;top:1400px">USDC</div><div class="a mono g" style="left:287px;top:1400px;font-size:6.5px;line-height:10px">USDC</div>
<div class="a mono" style="left:367px;top:1400px;font-size:7px;line-height:10px">169.53M</div><div class="a mono" style="left:469px;top:1400px;font-size:7px;line-height:10px">$63.79M</div><div class="a t7" style="left:615px;top:1400px">75%</div><div class="a t7" style="left:655px;top:1400px">25%</div>

<div class="a" style="left:221px;top:1429px;width:9px;height:9px;border-radius:50%;background:#4cba4c"></div>
<div class="a b7" style="left:235px;top:1428px">Avalanche</div><div class="a mono g" style="left:287px;top:1428px;font-size:6.5px;line-height:10px">AVAX</div>
<div class="a mono" style="left:367px;top:1428px;font-size:7px;line-height:10px">169.53M</div><div class="a mono" style="left:469px;top:1428px;font-size:7px;line-height:10px">$63.79M</div><div class="a t7" style="left:615px;top:1428px">75%</div><div class="a t7" style="left:655px;top:1428px">25%</div>

<div class="a" style="left:221px;top:1456px;width:9px;height:9px;border-radius:50%;background:#f5a623"></div>
<div class="a b7" style="left:235px;top:1455px">Polygon</div><div class="a mono g" style="left:287px;top:1455px;font-size:6.5px;line-height:10px">MATIC</div>
<div class="a mono" style="left:367px;top:1455px;font-size:7px;line-height:10px">169.53M</div><div class="a mono" style="left:469px;top:1455px;font-size:7px;line-height:10px">$63.79M</div><div class="a t7" style="left:615px;top:1455px">75%</div><div class="a t7" style="left:655px;top:1455px">25%</div>

<div class="a" style="left:221px;top:1483px;width:9px;height:9px;border-radius:50%;background:#7a0a0a"></div>
<div class="a b7" style="left:235px;top:1482px">Polkadot</div><div class="a mono g" style="left:287px;top:1482px;font-size:6.5px;line-height:10px">DOT</div>
<div class="a mono" style="left:367px;top:1482px;font-size:7px;line-height:10px">169.53M</div><div class="a mono" style="left:469px;top:1482px;font-size:7px;line-height:10px">$63.79M</div><div class="a t7" style="left:615px;top:1482px">75%</div><div class="a t7" style="left:655px;top:1482px">25%</div>

<div class="a" style="left:221px;top:1510px;width:9px;height:9px;border-radius:50%;background:#a0a0a0"></div>
<div class="a b7" style="left:235px;top:1509px">Cosmos</div><div class="a mono g" style="left:287px;top:1509px;font-size:6.5px;line-height:10px">ATOM</div>
<div class="a mono" style="left:367px;top:1509px;font-size:7px;line-height:10px">169.53M</div><div class="a mono" style="left:469px;top:1509px;font-size:7px;line-height:10px">$63.79M</div><div class="a t7" style="left:615px;top:1509px">75%</div><div class="a t7" style="left:655px;top:1509px">25%</div>

</div></body></html>
